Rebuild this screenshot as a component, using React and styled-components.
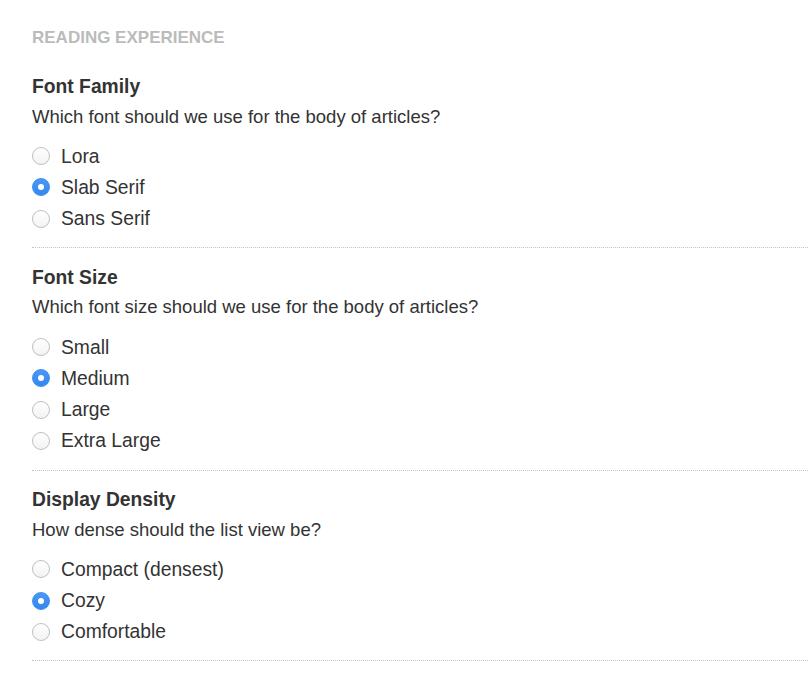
import React, { useState } from "react";
import styled, { createGlobalStyle } from "styled-components";

const GlobalStyle = createGlobalStyle`
  html, body {
    margin: 0;
    padding: 0;
    background: #fff;
  }
  body {
    font-family: "Liberation Sans", Arial, Helvetica, sans-serif;
    color: #333;
    -webkit-font-smoothing: antialiased;
  }
`;

const sections = [
  {
    key: "family",
    title: "Font Family",
    description: "Which font should we use for the body of articles?",
    options: ["Lora", "Slab Serif", "Sans Serif"],
    initial: "Slab Serif",
  },
  {
    key: "size",
    title: "Font Size",
    description: "Which font size should we use for the body of articles?",
    options: ["Small", "Medium", "Large", "Extra Large"],
    initial: "Medium",
  },
  {
    key: "density",
    title: "Display Density",
    description: "How dense should the list view be?",
    options: ["Compact (densest)", "Cozy", "Comfortable"],
    initial: "Cozy",
  },
];

function App() {
  const [values, setValues] = useState(() =>
    Object.fromEntries(sections.map((s) => [s.key, s.initial]))
  );

  return (
    <Page>
      <GlobalStyle />
      <PageTitle>Reading Experience</PageTitle>
      {sections.map((section) => (
        <Section key={section.key}>
          <Heading>{section.title}</Heading>
          <Description>{section.description}</Description>
          <OptionList>
            {section.options.map((opt) => (
              <Option key={opt}>
                <HiddenInput
                  type="radio"
                  name={section.key}
                  checked={values[section.key] === opt}
                  onChange={() => setValues({ ...values, [section.key]: opt })}
                />
                <Radio $checked={values[section.key] === opt} />
                <Label>{opt}</Label>
              </Option>
            ))}
          </OptionList>
        </Section>
      ))}
    </Page>
  );
}

const Page = styled.div`
  padding: 27px 0 40px 32px;
`;

const PageTitle = styled.h2`
  margin: 0;
  font-size: 17px;
  line-height: 21px;
  font-weight: bold;
  text-transform: uppercase;
  color: #bbb;
`;

const Section = styled.section`
  margin-top: 27px;
  padding-bottom: 13px;
  border-bottom: 1px dotted #c4c4c4;

  & + & {
    margin-top: 17.5px;
  }
`;

const Heading = styled.h3`
  margin: 0;
  font-size: 19.3px;
  line-height: 24px;
  font-weight: bold;
  color: #333;
`;

const Description = styled.p`
  margin: 7.5px 0 0;
  font-size: 18.5px;
  line-height: 20px;
  color: #333;
`;

const OptionList = styled.div`
  margin-top: 14px;
  display: flex;
  flex-direction: column;
`;

const Option = styled.label`
  display: flex;
  align-items: center;
  height: 31.3px;
  cursor: pointer;
`;

const HiddenInput = styled.input`
  position: absolute;
  opacity: 0;
  width: 0;
  height: 0;
  margin: 0;
`;

const Radio = styled.span`
  box-sizing: border-box;
  width: 18px;
  height: 18px;
  border-radius: 50%;
  flex: none;
  margin-right: 11px;
  position: relative;
  border: 1px solid ${(p) => (p.$checked ? "#3a8ef1" : "#bfbfbf")};
  background: ${(p) =>
    p.$checked
      ? "linear-gradient(#4a98f5, #3586ee)"
      : "linear-gradient(#fff, #f3f3f3)"};

  &::after {
    content: "";
    display: ${(p) => (p.$checked ? "block" : "none")};
    position: absolute;
    left: 50%;
    top: 50%;
    width: 6px;
    height: 6px;
    margin: -3px 0 0 -3px;
    border-radius: 50%;
    background: #fff;
  }
`;

const Label = styled.span`
  font-size: 19.3px;
  line-height: 31px;
  color: #333;
`;

export default App;
